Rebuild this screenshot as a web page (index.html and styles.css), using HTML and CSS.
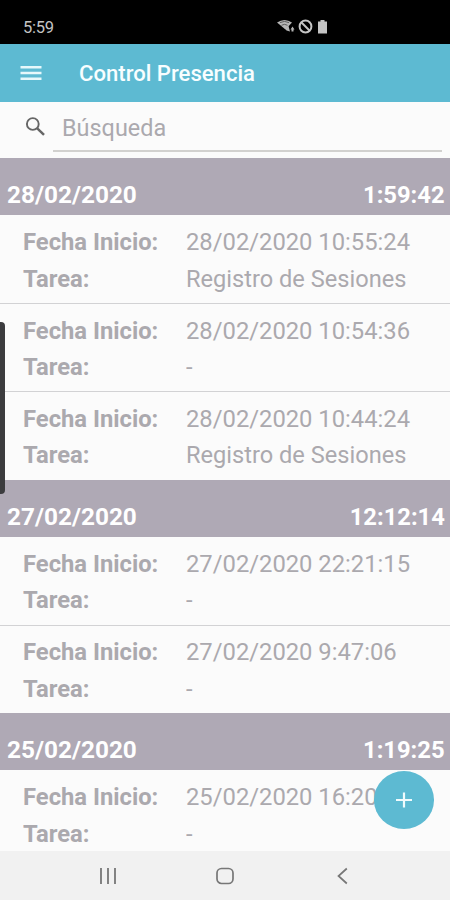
FILE: index.html
```html
<!DOCTYPE html>
<html lang="es">
  <head>
    <meta charset="utf-8">
    <title>Control Presencia</title>
    <link rel="stylesheet" href="styles.css">
  </head>

  <body>
    <div class="statusbar">
      <span class="clock">5:59</span>
      <svg class="status-icons" width="52" height="16" viewBox="0 0 52 16">
        <path d="M0 3.500Q7.500 -1.500 15 3.500L8.500 10.500Z" fill="#b5b5b5"/>
        <path d="M3 3.600Q7.500 1.200 12 3.600M4.500 6.300Q7.500 4.300 10.500 6.300" fill="none" stroke="#444" stroke-width=".8"/>
        <path d="M7.500 9L11.500 7L13 12.500L9.500 11.500ZM15.500 7.500L17.500 10.500H16.500V12.500H14.500V10.500H13.500Z" fill="#b5b5b5"/>
        <circle cx="28.500" cy="7.500" r="5.900" fill="none" stroke="#c4c4c4" stroke-width="2"/>
        <path d="M24.500 3.500L32.500 11.500" stroke="#c4c4c4" stroke-width="2"/>
        <path d="M43.500 1H47.500V2.500H50V14.500H41V2.500H43.500Z" fill="#c4c4c4"/>
      </svg>
    </div>

    <div class="toolbar">
      <svg class="menu" width="22" height="16" viewBox="0 0 22 16">
        <path d="M.5 2.200H21.500M.5 8H21.500M.5 13.800H21.500" stroke="#e6f8fb" stroke-width="2.600"/>
      </svg>
      <h1>Control Presencia</h1>
    </div>

    <div class="search">
      <svg class="lens" width="20" height="20" viewBox="0 0 20 20">
        <circle cx="7.800" cy="7" r="5.900" fill="none" stroke="#666" stroke-width="1.900"/>
        <path d="M12 11.200L19 17.800" stroke="#666" stroke-width="2.500"/>
      </svg>
      <div class="field"><span>Búsqueda</span></div>
    </div>

    <div class="list">
      <div class="day"><span>28/02/2020</span><span class="total">1:59:42</span></div>
      <div class="item">
        <b>Fecha Inicio:</b><span>28/02/2020 10:55:24</span>
        <b>Tarea:</b><span class="task">Registro de Sesiones</span>
      </div>
      <div class="item">
        <b>Fecha Inicio:</b><span>28/02/2020 10:54:36</span>
        <b>Tarea:</b><span class="task">-</span>
      </div>
      <div class="item">
        <b>Fecha Inicio:</b><span>28/02/2020 10:44:24</span>
        <b>Tarea:</b><span class="task">Registro de Sesiones</span>
      </div>

      <div class="day"><span>27/02/2020</span><span class="total">12:12:14</span></div>
      <div class="item">
        <b>Fecha Inicio:</b><span>27/02/2020 22:21:15</span>
        <b>Tarea:</b><span class="task">-</span>
      </div>
      <div class="item">
        <b>Fecha Inicio:</b><span>27/02/2020 9:47:06</span>
        <b>Tarea:</b><span class="task">-</span>
      </div>

      <div class="day"><span>25/02/2020</span><span class="total">1:19:25</span></div>
      <div class="item">
        <b>Fecha Inicio:</b><span>25/02/2020 16:20</span>
        <b>Tarea:</b><span class="task">-</span>
      </div>
    </div>

    <div class="navbar">
      <svg width="18" height="18" viewBox="0 0 18 18">
        <path d="M2 1V17M9 1V17M16 1V17" stroke="#777" stroke-width="1.800"/>
      </svg>
      <svg width="18" height="18" viewBox="0 0 18 18">
        <rect x="1" y="1.500" width="16" height="15" rx="4.500" fill="none" stroke="#777" stroke-width="1.700"/>
      </svg>
      <svg width="18" height="18" viewBox="0 0 18 18">
        <path d="M13.800 1.500L5.500 9L13.800 16.500" fill="none" stroke="#777" stroke-width="1.700"/>
      </svg>
    </div>

    <div class="edge"></div>
    <div class="fab">
      <svg width="16" height="16" viewBox="0 0 16 16">
        <path d="M0 8H16M8 .5V15.500" stroke="#f0fbfd" stroke-width="2.200"/>
      </svg>
    </div>
  </body>
</html>
```

FILE: styles.css
```css
body
{
	margin: 0;
	width: 450px;
	height: 900px;
	display: flex;
	flex-direction: column;
	position: relative;
	overflow: hidden;
	background: #FBFBFB;
	font-family: Roboto, sans-serif;
	font-size: 23.2px;
	color: #ABA9AE;
}
.statusbar
{
	flex: none;
	height: 43.5px;
	background: #000;
	display: flex;
	align-items: flex-start;
}
.clock
{
	width: 254px;
	padding: 18px 0 0 23px;
	font-size: 16.5px;
	letter-spacing: -0.3px;
	line-height: 20px;
	color: #C4C4C4;
}
.status-icons
{
	margin-top: 19px;
}
.toolbar
{
	flex: none;
	height: 58px;
	background: #5DBAD2;
	display: flex;
	align-items: center;
}
.menu
{
	margin: 0 37px 0 20px;
}
.toolbar h1
{
	margin: 2px 0 0;
	font-size: 21.5px;
	font-weight: 500;
	color: #F8FEFF;
	transform: scaleX(1.028);
	transform-origin: left;
}
.search
{
	flex: none;
	height: 56.5px;
	display: flex;
}
.lens
{
	margin: 15px 8px 0 25px;
}
.field
{
	width: 379.5px;
	height: 48px;
	padding-left: 9px;
	border-bottom: 2px solid #D2D1CF;
	line-height: 52px;
}
.field span, .day span, .item b, .item span
{
	display: inline-block;
	transform: scaleX(1.025);
	transform-origin: left;
}
.field span
{
	transform: scaleX(1.01);
}
.list
{
	flex: 1;
	min-height: 0;
	overflow: hidden;
}
.day
{
	height: 57.2px;
	box-sizing: border-box;
	padding: 23.4px 5.5px 0 7px;
	display: flex;
	justify-content: space-between;
	background: #AFA9B5;
	color: #FFF;
	font-weight: 700;
	line-height: 28px;
}
.day span
{
	transform: scaleX(1.05);
}
.day .total
{
	transform: scaleX(1.025);
	transform-origin: right;
}
.item
{
	height: 88.15px;
	box-sizing: border-box;
	padding: 9px 0 0 22.6px;
	display: grid;
	grid-template-columns: 163.5px 1fr;
	grid-auto-rows: 36.4px;
	line-height: 36.4px;
	white-space: nowrap;
}
.item + .item
{
	border-top: 1px solid #D2D2D4;
	padding-top: 8.3px;
}
.item b
{
	font-weight: 700;
}
.item .task
{
	transform: scaleX(1.018);
}
.navbar
{
	flex: none;
	height: 49px;
	background: #F1F1F1;
	display: flex;
	justify-content: center;
	align-items: center;
	gap: 99px;
}
.edge
{
	position: absolute;
	left: 0;
	top: 322px;
	width: 4.5px;
	height: 172px;
	border-radius: 0 4px 4px 0;
	background: #3C3C3E;
}
.fab
{
	position: absolute;
	left: 374px;
	top: 771px;
	width: 60px;
	height: 57.5px;
	border-radius: 50%;
	background: #5DBAD2;
	display: flex;
	justify-content: center;
	align-items: center;
}
```
